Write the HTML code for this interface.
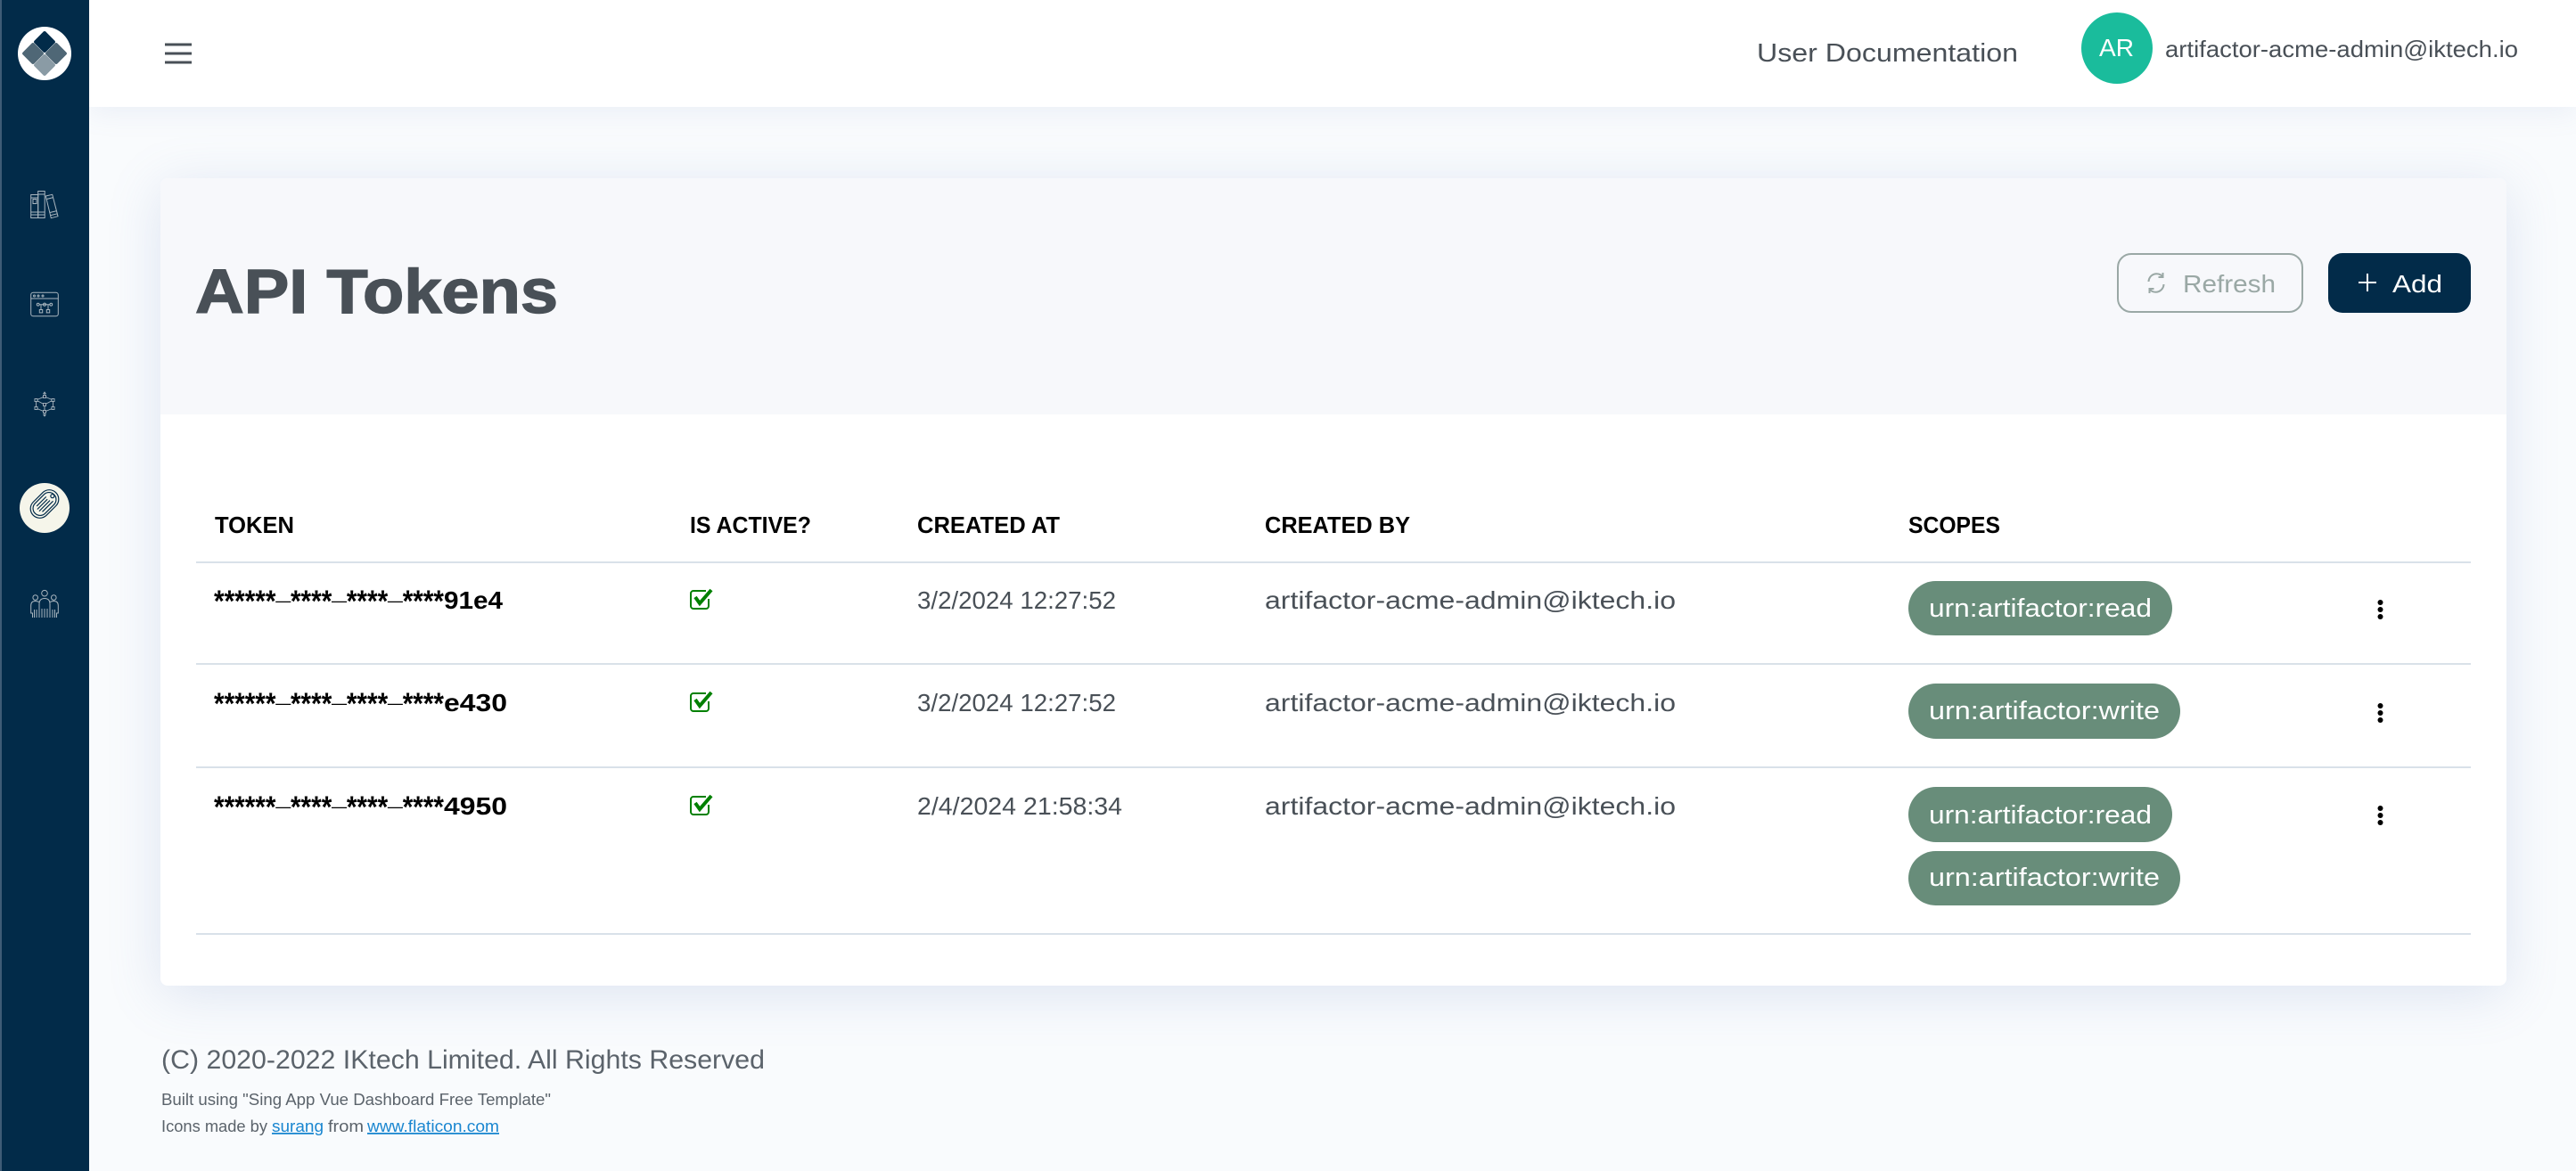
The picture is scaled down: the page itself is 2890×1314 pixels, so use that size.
<!DOCTYPE html>
<html><head><meta charset="utf-8"><title>API Tokens</title>
<style>
html,body{margin:0;padding:0;width:2890px;height:1314px;overflow:hidden;background:#f9fbfd}
#side{position:absolute;left:0;top:0;width:100px;height:1314px;background:#022b49;border-left:2px solid #3f5c76;box-sizing:border-box;z-index:3}
#head{position:absolute;left:100px;top:0;width:2790px;height:120px;background:#fff;box-shadow:0 4px 30px rgba(120,145,190,.13);z-index:2}
#card{position:absolute;left:180px;top:200px;width:2632px;height:906px;background:#fff;border-radius:8px;box-shadow:0 10px 60px rgba(115,140,195,.2);overflow:hidden;z-index:1}
#cardhead{height:265px;background:#f7f8fb}
.ln{position:absolute;left:220px;width:2552px;height:2px;background:#d9e1e9;z-index:2}
.chip{position:absolute;background:#688d7a;border-radius:31px;left:2141px;z-index:2}
.btn{position:absolute;top:284px;height:67px;box-sizing:border-box;border-radius:16px;z-index:2}
svg#t{position:absolute;left:0;top:0;z-index:4}
text{font-family:"Liberation Sans",sans-serif}
.l{fill:#495057;font-size:28px}
.th{fill:#000;font-size:26px;font-weight:bold}
.tk{fill:#000;font-size:28px;font-weight:bold}
.st{fill:#000;font-size:34px;font-weight:bold}
.c{fill:#fff;font-size:29px}
.f{fill:#5b636b;font-size:18px}
.a{fill:#1a86d0;font-size:18px;text-decoration:underline}
</style></head><body>
<div id="side"></div>
<div id="head"></div>
<div id="card"><div id="cardhead"></div></div>
<div class="btn" style="left:2375px;width:209px;border:2px solid #9aa8a5"></div>
<div class="btn" style="left:2612px;width:160px;background:#022b49"></div>
<div class="ln" style="top:630px"></div>
<div class="ln" style="top:744px"></div>
<div class="ln" style="top:860px"></div>
<div class="ln" style="top:1047px"></div>
<div class="chip" style="top:652px;width:296px;height:61px"></div>
<div class="chip" style="top:767px;width:305px;height:62px"></div>
<div class="chip" style="top:883px;width:296px;height:62px"></div>
<div class="chip" style="top:955px;width:305px;height:61px"></div>

<svg id="t" width="2890" height="1314" viewBox="0 0 2890 1314" xmlns="http://www.w3.org/2000/svg">
<!-- logo -->
<circle cx="50" cy="60" r="30" fill="#fff"/>
<g>
<rect x="-9" y="-9" width="18" height="18" rx="2" transform="translate(50 47) rotate(45)" fill="#022b49"/>
<rect x="-9" y="-9" width="18" height="18" rx="2" transform="translate(37 60) rotate(45)" fill="#4f6776"/>
<rect x="-9" y="-9" width="18" height="18" rx="2" transform="translate(63 60) rotate(45)" fill="#4f6776"/>
<rect x="-9" y="-9" width="18" height="18" rx="2" transform="translate(50 73) rotate(45)" fill="#8a9ba5"/>
</g>
<!-- nav icons -->
<g fill="none" stroke="#aab6bf" stroke-width="1">
<!-- books -->
<rect x="34.7" y="218.5" width="8" height="26"/><rect x="42.7" y="214.5" width="7.5" height="30"/>
<path d="M34.7 222h8M34.7 238h8M34.7 241h8M42.7 218h7.5M42.7 238h7.5M42.7 241h7.5"/>
<rect x="37" y="223.5" width="4" height="5"/>
<path d="M51.3 220L58.7 218.3L65 242.7L57.3 244.7ZM52.2 223.5L59.6 221.6M56 238.5L63.6 236.6M56.8 241.6L64.3 239.8"/>
<!-- window -->
<rect x="34.7" y="328.3" width="30.6" height="26.4" rx="2.5"/>
<path d="M34.7 335h30.6"/>
<circle cx="38.5" cy="332" r="1"/><circle cx="43" cy="332" r="1"/><circle cx="48" cy="332" r="1"/>
<path d="M44 341.7h12M46 342C46 344 46 345 46 348M54 342C54 344 54 345 54 348"/>
<circle cx="42.7" cy="341.7" r="1.4"/><circle cx="50" cy="341.7" r="1.6"/><circle cx="57.3" cy="341.7" r="1.4"/>
<rect x="44.3" y="347.5" width="3.4" height="3.4"/><rect x="52.3" y="347.5" width="3.4" height="3.4"/>
<!-- cube -->
<g stroke-width=".9">
<path d="M50 445L59.5 449V458L50 462L40.5 458V449ZM40.5 449L50 454L59.5 449M50 454V462M50 445V441M50 462V467M48.5 442L50 440L51.5 442M48.5 465L50 467L51.5 465"/>
<g fill="#022b49">
<rect x="48.5" y="443.5" width="3" height="3"/><rect x="39" y="447.5" width="3" height="3"/><rect x="58" y="447.5" width="3" height="3"/>
<rect x="39" y="456.5" width="3" height="3"/><rect x="58" y="456.5" width="3" height="3"/>
<rect x="48.5" y="452.5" width="3" height="3"/><rect x="48.5" y="460.5" width="3" height="3"/>
</g>
</g>
<!-- people -->
<circle cx="50" cy="665.7" r="3.3"/><circle cx="39.7" cy="670.5" r="2.8"/><circle cx="60.3" cy="670.5" r="2.8"/>
<path d="M44 693V678Q44 671.5 50 671.5Q56 671.5 56 678V693M47 683V693M50 683V693M53 683V693"/>
<path d="M44 675.5Q41.5 674.5 39.7 674.5Q34.7 674.5 34.7 679.5V688H36.5V693M38.5 684V693M41 684V693"/>
<path d="M56 675.5Q58.5 674.5 60.3 674.5Q65.3 674.5 65.3 679.5V688H63.5V693M61.5 684V693M59 684V693"/>
</g>
<!-- active -->
<circle cx="50" cy="570" r="28" fill="#f5f5ea"/>
<g transform="translate(50 565.5) rotate(-45)" fill="none" stroke="#022b49" stroke-width="1.2">
<rect x="-18" y="-10.5" width="36" height="21" rx="10.5"/>
<rect x="-15" y="-8" width="30" height="16" rx="8"/>
<path d="M-8 -4.5H7M-10 -1.5H6M-10 1.5H7M-8 4.5H9"/>
<circle cx="12.5" cy="0" r="2"/>
</g>
<!-- hamburger -->
<path d="M185 50h30M185 60h30M185 70h30" stroke="#495057" stroke-width="3"/>
<!-- header text -->
<text class="l" x="1971" y="69" style="font-size:29px" textLength="293" lengthAdjust="spacingAndGlyphs">User Documentation</text>
<circle cx="2375" cy="54" r="40" fill="#1abc9c"/>
<text x="2355" y="63" fill="#fff" style="font-size:28px" textLength="39" lengthAdjust="spacingAndGlyphs">AR</text>
<text class="l" x="2429" y="64" style="font-size:26px" textLength="396" lengthAdjust="spacingAndGlyphs">artifactor-acme-admin@iktech.io</text>
<!-- title -->
<text x="219" y="351" fill="#495057" stroke="#495057" stroke-width="1.4" font-weight="bold" style="font-size:70px" textLength="407" lengthAdjust="spacingAndGlyphs">API Tokens</text>
<!-- buttons -->
<g fill="none" stroke="#9aa8a5" stroke-width="2">
<path d="M2410.5 316a9 9 0 0 1 15.5-6M2427.5 319a9 9 0 0 1-15.5 6"/>
<path d="M2426.5 306v5h-5M2411.5 329v-5h5"/>
</g>
<text x="2449" y="328" fill="#9aa8a5" style="font-size:28px" textLength="104" lengthAdjust="spacingAndGlyphs">Refresh</text>
<path d="M2646 317h20M2656 307v20" stroke="#fff" stroke-width="2"/>
<text x="2684" y="328" fill="#fff" style="font-size:28px" textLength="56" lengthAdjust="spacingAndGlyphs">Add</text>
<!-- table header -->
<text class="th" x="241" y="598" textLength="89" lengthAdjust="spacingAndGlyphs">TOKEN</text>
<text class="th" x="774" y="598" textLength="136" lengthAdjust="spacingAndGlyphs">IS ACTIVE?</text>
<text class="th" x="1029" y="598" textLength="160" lengthAdjust="spacingAndGlyphs">CREATED AT</text>
<text class="th" x="1419" y="598" textLength="163" lengthAdjust="spacingAndGlyphs">CREATED BY</text>
<text class="th" x="2141" y="598" textLength="103" lengthAdjust="spacingAndGlyphs">SCOPES</text>
<!-- row 1 -->
<text class="st" x="240" y="686" textLength="258" lengthAdjust="spacingAndGlyphs">******<tspan dy="-14">_</tspan><tspan dy="14">****</tspan><tspan dy="-14">_</tspan><tspan dy="14">****</tspan><tspan dy="-14">_</tspan><tspan dy="14">****</tspan></text>
<text class="tk" x="498" y="683" textLength="66" lengthAdjust="spacingAndGlyphs">91e4</text>
<text class="l" x="1029" y="683" textLength="223" lengthAdjust="spacingAndGlyphs">3/2/2024 12:27:52</text>
<text class="l" x="1419" y="683" textLength="461" lengthAdjust="spacingAndGlyphs">artifactor-acme-admin@iktech.io</text>
<!-- row 2 -->
<text class="st" x="240" y="801" textLength="258" lengthAdjust="spacingAndGlyphs">******<tspan dy="-14">_</tspan><tspan dy="14">****</tspan><tspan dy="-14">_</tspan><tspan dy="14">****</tspan><tspan dy="-14">_</tspan><tspan dy="14">****</tspan></text>
<text class="tk" x="498" y="798" textLength="71" lengthAdjust="spacingAndGlyphs">e430</text>
<text class="l" x="1029" y="798" textLength="223" lengthAdjust="spacingAndGlyphs">3/2/2024 12:27:52</text>
<text class="l" x="1419" y="798" textLength="461" lengthAdjust="spacingAndGlyphs">artifactor-acme-admin@iktech.io</text>
<!-- row 3 -->
<text class="st" x="240" y="917" textLength="258" lengthAdjust="spacingAndGlyphs">******<tspan dy="-14">_</tspan><tspan dy="14">****</tspan><tspan dy="-14">_</tspan><tspan dy="14">****</tspan><tspan dy="-14">_</tspan><tspan dy="14">****</tspan></text>
<text class="tk" x="498" y="914" textLength="71" lengthAdjust="spacingAndGlyphs">4950</text>
<text class="l" x="1029" y="914" textLength="230" lengthAdjust="spacingAndGlyphs">2/4/2024 21:58:34</text>
<text class="l" x="1419" y="914" textLength="461" lengthAdjust="spacingAndGlyphs">artifactor-acme-admin@iktech.io</text>
<!-- checks -->
<g fill="none" stroke="#008000">
<g><path d="M792 663H778a3 3 0 0 0-3 3v14a3 3 0 0 0 3 3h14a3 3 0 0 0 3-3v-8" stroke-width="2"/><path d="M780 670l5 7 13-15" stroke-width="4"/></g>
<g transform="translate(0 115)"><path d="M792 663H778a3 3 0 0 0-3 3v14a3 3 0 0 0 3 3h14a3 3 0 0 0 3-3v-8" stroke-width="2"/><path d="M780 670l5 7 13-15" stroke-width="4"/></g>
<g transform="translate(0 231)"><path d="M792 663H778a3 3 0 0 0-3 3v14a3 3 0 0 0 3 3h14a3 3 0 0 0 3-3v-8" stroke-width="2"/><path d="M780 670l5 7 13-15" stroke-width="4"/></g>
</g>
<!-- chips text -->
<text class="c" x="2164" y="692" textLength="250" lengthAdjust="spacingAndGlyphs">urn:artifactor:read</text>
<text class="c" x="2164" y="807" textLength="259" lengthAdjust="spacingAndGlyphs">urn:artifactor:write</text>
<text class="c" x="2164" y="924" textLength="250" lengthAdjust="spacingAndGlyphs">urn:artifactor:read</text>
<text class="c" x="2164" y="994" textLength="259" lengthAdjust="spacingAndGlyphs">urn:artifactor:write</text>
<!-- kebabs -->
<g fill="#000">
<circle cx="2670.5" cy="676" r="3"/><circle cx="2670.5" cy="684" r="3"/><circle cx="2670.5" cy="692" r="3"/>
<circle cx="2670.5" cy="792" r="3"/><circle cx="2670.5" cy="800" r="3"/><circle cx="2670.5" cy="808" r="3"/>
<circle cx="2670.5" cy="907" r="3"/><circle cx="2670.5" cy="915" r="3"/><circle cx="2670.5" cy="923" r="3"/>
</g>
<!-- footer -->
<text x="181" y="1199" fill="#5b636b" style="font-size:30px" textLength="677" lengthAdjust="spacingAndGlyphs">(C) 2020-2022 IKtech Limited. All Rights Reserved</text>
<text class="f" x="181" y="1240" textLength="437" lengthAdjust="spacingAndGlyphs">Built using "Sing App Vue Dashboard Free Template"</text>
<text class="f" x="181" y="1270" textLength="119" lengthAdjust="spacingAndGlyphs">Icons made by</text>
<text class="a" x="305" y="1270" textLength="58" lengthAdjust="spacingAndGlyphs">surang</text>
<text class="f" x="368" y="1270" textLength="40" lengthAdjust="spacingAndGlyphs">from</text>
<text class="a" x="412" y="1270" textLength="148" lengthAdjust="spacingAndGlyphs">www.flaticon.com</text>
</svg>
</body></html>
